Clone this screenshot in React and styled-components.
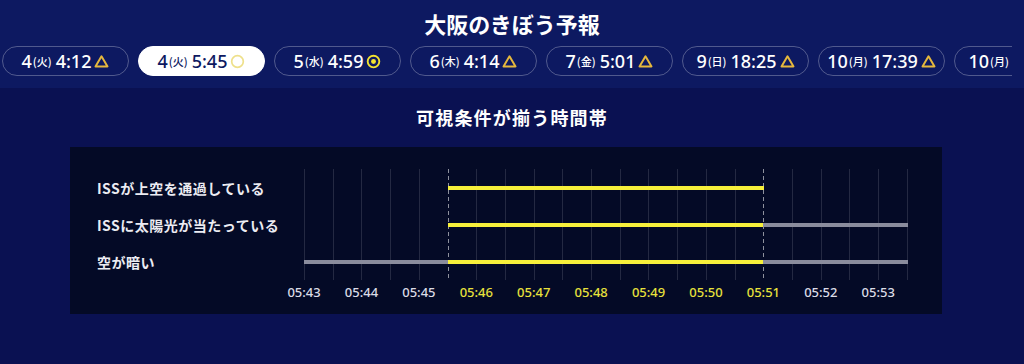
import React from "react";
import styled, { createGlobalStyle } from "styled-components";

const GlobalStyle = createGlobalStyle`
  html, body {
    margin: 0;
    padding: 0;
    background: #0a1152;
  }
  body {
    font-family: "Noto Sans", "Noto Sans CJK JP", sans-serif;
    color: #ffffff;
    min-height: 100vh;
  }
`;

const Page = styled.div`
  width: 1024px;
  min-height: 364px;
  background: #0a1152;
`;

const Header = styled.header`
  background: #0d1961;
  padding: 8px 0 12px;
  height: 88px;
  box-sizing: border-box;
  display: flex;
  flex-direction: column;
  gap: 8px;
`;

const Title = styled.h1`
  margin: 0;
  font-family: "Noto Sans CJK JP", sans-serif;
  font-size: 22px;
  line-height: 30px;
  font-weight: 700;
  text-align: center;
  color: #ffffff;
`;

const PillRow = styled.div`
  display: flex;
  gap: 9px;
  padding-left: 2px;
  width: 1010px;
  overflow: hidden;
`;

const Pill = styled.button`
  flex: 0 0 127px;
  height: 30px;
  box-sizing: border-box;
  border-radius: 15px;
  border: 1px solid ${(p) => (p.$active ? "#ffffff" : "rgba(255,255,255,0.28)")};
  background: ${(p) => (p.$active ? "#ffffff" : "transparent")};
  color: ${(p) => (p.$active ? "#0d1961" : "#ffffff")};
  display: flex;
  align-items: center;
  justify-content: center;
  padding: 0;
  font-family: "Noto Sans", "Noto Sans CJK JP", sans-serif;
  white-space: nowrap;
  cursor: pointer;
`;

const Day = styled.span`
  font-size: 18px;
  font-weight: 500;
  line-height: 1;
`;

const Week = styled.span`
  font-family: "Noto Sans CJK JP", sans-serif;
  font-size: 11px;
  font-weight: 500;
  margin: 1px 4px 0 1px;
  line-height: 1;
`;

const Time = styled.span`
  font-size: 18px;
  font-weight: 500;
  line-height: 1;
  margin-right: 3px;
`;

const IconBox = styled.svg`
  width: 15px;
  height: 15px;
  flex: none;
`;

const Mark = ({ kind }) => {
  if (kind === "triangle")
    return (
      <IconBox viewBox="0 0 16 16">
        <path d="M8 2.4 L14.4 13.3 L1.6 13.3 Z" fill="none" stroke="#e6b83d" strokeWidth="2.1" strokeLinejoin="round" />
      </IconBox>
    );
  if (kind === "circle")
    return (
      <IconBox viewBox="0 0 16 16">
        <circle cx="8" cy="8" r="6.2" fill="none" stroke="#eee08a" strokeWidth="1.8" />
      </IconBox>
    );
  return (
    <IconBox viewBox="0 0 16 16">
      <circle cx="8" cy="8" r="6.2" fill="none" stroke="#f3e430" strokeWidth="2" />
      <circle cx="8" cy="8" r="2.6" fill="#f3e430" />
    </IconBox>
  );
};

const Section = styled.section`
  display: flex;
  flex-direction: column;
  padding-top: 16px;
`;

const SectionTitle = styled.h2`
  margin: 0 0 17px;
  font-family: "Noto Sans CJK JP", sans-serif;
  font-size: 18px;
  line-height: 26px;
  font-weight: 700;
  letter-spacing: 1.2px;
  text-align: center;
  color: #ffffff;
`;

const Panel = styled.div`
  margin-left: 70px;
  width: 872px;
  height: 167px;
  box-sizing: border-box;
  background: #040a26;
  padding: 22px 0 0 27px;
  display: grid;
  grid-template-columns: 207px 604px;
  grid-template-rows: 111px auto;
`;

const Labels = styled.div`
  display: flex;
  flex-direction: column;
`;

const RowLabel = styled.div`
  height: 37px;
  display: flex;
  align-items: center;
  font-family: "Noto Sans CJK JP", sans-serif;
  font-size: 14px;
  font-weight: 700;
  letter-spacing: 0.5px;
  color: #ececf2;
`;

const Chart = styled.div`
  position: relative;
  width: 604px;
  height: 111px;
`;

const GridLines = styled.div`
  height: 100%;
  display: flex;
  justify-content: space-between;
`;

const GridLine = styled.div`
  width: 1px;
  height: 100%;
  background: ${(p) =>
    p.$dashed
      ? "repeating-linear-gradient(to bottom, rgba(255,255,255,0.55) 0 4px, transparent 4px 7px)"
      : "rgba(255,255,255,0.13)"};
`;

const Bars = styled.div`
  position: absolute;
  inset: 0;
  display: flex;
  flex-direction: column;
`;

const BarRow = styled.div`
  position: relative;
  height: 37px;
`;

const Bar = styled.div`
  position: absolute;
  top: 17px;
  height: 4px;
  background: ${(p) => (p.$on ? "#f7f03b" : "#8a8c9d")};
`;

const Axis = styled.div`
  grid-column: 2;
  display: flex;
  margin-left: -28.7px;
  padding-top: 4px;
`;

const Tick = styled.div`
  flex: 0 0 57.43px;
  text-align: center;
  font-size: 13px;
  line-height: 16px;
  font-weight: 500;
  color: ${(p) => (p.$hot ? "#e8e13c" : "#dcdce6")};
`;

const pills = [
  { d: "4", w: "火", t: "4:12", k: "triangle" },
  { d: "4", w: "火", t: "5:45", k: "circle", active: true },
  { d: "5", w: "水", t: "4:59", k: "double" },
  { d: "6", w: "木", t: "4:14", k: "triangle" },
  { d: "7", w: "金", t: "5:01", k: "triangle" },
  { d: "9", w: "日", t: "18:25", k: "triangle" },
  { d: "10", w: "月", t: "17:39", k: "triangle" },
  { d: "10", w: "月", t: "5:22", k: "triangle" },
];

const SPAN = 10.5;
const WIDTH = 603;
const px = (m) => (m / SPAN) * WIDTH;

const rows = [
  { label: "ISSが上空を通過している", segs: [{ a: 2.5, b: 8, on: true }] },
  {
    label: "ISSに太陽光が当たっている",
    segs: [
      { a: 2.5, b: 8, on: true },
      { a: 8, b: 10.5, on: false },
    ],
  },
  {
    label: "空が暗い",
    segs: [
      { a: 0, b: 2.5, on: false },
      { a: 2.5, b: 8, on: true },
      { a: 8, b: 10.5, on: false },
    ],
  },
];

const ticks = ["05:43", "05:44", "05:45", "05:46", "05:47", "05:48", "05:49", "05:50", "05:51", "05:52", "05:53"];

export default function App() {
  return (
    <Page>
      <GlobalStyle />
      <Header>
        <Title>大阪のきぼう予報</Title>
        <PillRow>
          {pills.map((p, i) => (
            <Pill key={i} $active={p.active}>
              <Day>{p.d}</Day>
              <Week>({p.w})</Week>
              <Time>{p.t}</Time>
              <Mark kind={p.k} />
            </Pill>
          ))}
        </PillRow>
      </Header>
      <Section>
        <SectionTitle>可視条件が揃う時間帯</SectionTitle>
        <Panel>
          <Labels>
            {rows.map((r) => (
              <RowLabel key={r.label}>{r.label}</RowLabel>
            ))}
          </Labels>
          <Chart>
            <GridLines>
              {Array.from({ length: 22 }, (_, i) => (
                <GridLine key={i} $dashed={i === 5 || i === 16} />
              ))}
            </GridLines>
            <Bars>
              {rows.map((r) => (
                <BarRow key={r.label}>
                  {r.segs.map((s, j) => (
                    <Bar
                      key={j}
                      $on={s.on}
                      style={{ left: `${px(s.a)}px`, width: `${px(s.b) - px(s.a) + 1}px` }}
                    />
                  ))}
                </BarRow>
              ))}
            </Bars>
          </Chart>
          <Axis>
            {ticks.map((t, i) => (
              <Tick key={t} $hot={i >= 3 && i <= 8}>
                {t}
              </Tick>
            ))}
          </Axis>
        </Panel>
      </Section>
    </Page>
  );
}
